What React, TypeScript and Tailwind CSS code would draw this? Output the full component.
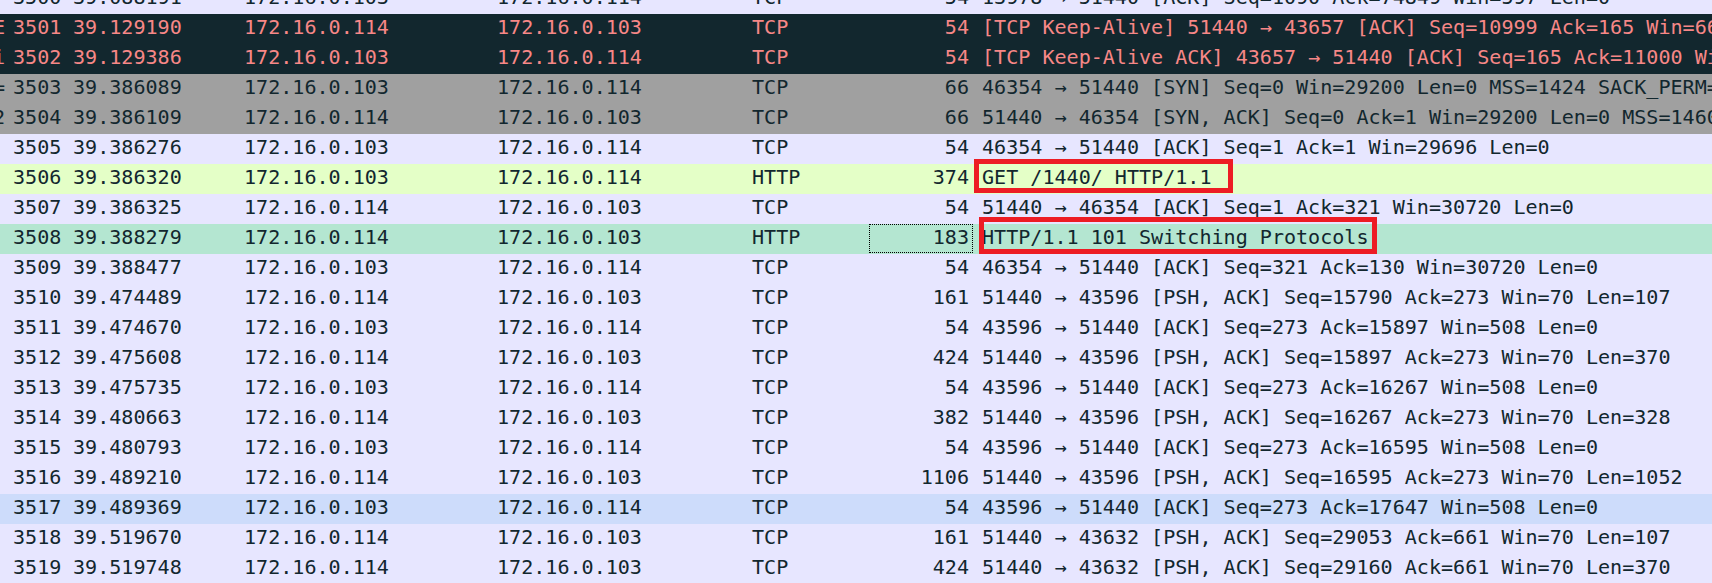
import React from "react";

type Packet = {
  mark: string;
  no: number;
  time: string;
  src: string;
  dst: string;
  proto: string;
  len: number;
  info: string;
  kind: "tcp" | "bad" | "syn" | "http" | "sel" | "hover";
  box?: 1 | 2;
  focus?: boolean;
};

const A = "172.16.0.103";
const B = "172.16.0.114";

const packets: Packet[] = [
  { mark: "", no: 3500, time: "39.088191", src: A, dst: B, proto: "TCP", len: 54, info: "13978 → 51440 [ACK] Seq=1090 Ack=74849 Win=597 Len=0", kind: "tcp" },
  { mark: "E", no: 3501, time: "39.129190", src: B, dst: A, proto: "TCP", len: 54, info: "[TCP Keep-Alive] 51440 → 43657 [ACK] Seq=10999 Ack=165 Win=661 Len=0", kind: "bad" },
  { mark: "i", no: 3502, time: "39.129386", src: A, dst: B, proto: "TCP", len: 54, info: "[TCP Keep-Alive ACK] 43657 → 51440 [ACK] Seq=165 Ack=11000 Win=502 Len=0", kind: "bad" },
  { mark: "=", no: 3503, time: "39.386089", src: A, dst: B, proto: "TCP", len: 66, info: "46354 → 51440 [SYN] Seq=0 Win=29200 Len=0 MSS=1424 SACK_PERM=1 WS=128", kind: "syn" },
  { mark: "2", no: 3504, time: "39.386109", src: B, dst: A, proto: "TCP", len: 66, info: "51440 → 46354 [SYN, ACK] Seq=0 Ack=1 Win=29200 Len=0 MSS=1460 SACK_PERM=1 WS=128", kind: "syn" },
  { mark: "", no: 3505, time: "39.386276", src: A, dst: B, proto: "TCP", len: 54, info: "46354 → 51440 [ACK] Seq=1 Ack=1 Win=29696 Len=0", kind: "tcp" },
  { mark: "", no: 3506, time: "39.386320", src: A, dst: B, proto: "HTTP", len: 374, info: "GET /1440/ HTTP/1.1", kind: "http", box: 1 },
  { mark: "", no: 3507, time: "39.386325", src: B, dst: A, proto: "TCP", len: 54, info: "51440 → 46354 [ACK] Seq=1 Ack=321 Win=30720 Len=0", kind: "tcp" },
  { mark: "", no: 3508, time: "39.388279", src: B, dst: A, proto: "HTTP", len: 183, info: "HTTP/1.1 101 Switching Protocols", kind: "sel", box: 2, focus: true },
  { mark: "", no: 3509, time: "39.388477", src: A, dst: B, proto: "TCP", len: 54, info: "46354 → 51440 [ACK] Seq=321 Ack=130 Win=30720 Len=0", kind: "tcp" },
  { mark: "", no: 3510, time: "39.474489", src: B, dst: A, proto: "TCP", len: 161, info: "51440 → 43596 [PSH, ACK] Seq=15790 Ack=273 Win=70 Len=107", kind: "tcp" },
  { mark: "", no: 3511, time: "39.474670", src: A, dst: B, proto: "TCP", len: 54, info: "43596 → 51440 [ACK] Seq=273 Ack=15897 Win=508 Len=0", kind: "tcp" },
  { mark: "", no: 3512, time: "39.475608", src: B, dst: A, proto: "TCP", len: 424, info: "51440 → 43596 [PSH, ACK] Seq=15897 Ack=273 Win=70 Len=370", kind: "tcp" },
  { mark: "", no: 3513, time: "39.475735", src: A, dst: B, proto: "TCP", len: 54, info: "43596 → 51440 [ACK] Seq=273 Ack=16267 Win=508 Len=0", kind: "tcp" },
  { mark: "", no: 3514, time: "39.480663", src: B, dst: A, proto: "TCP", len: 382, info: "51440 → 43596 [PSH, ACK] Seq=16267 Ack=273 Win=70 Len=328", kind: "tcp" },
  { mark: "", no: 3515, time: "39.480793", src: A, dst: B, proto: "TCP", len: 54, info: "43596 → 51440 [ACK] Seq=273 Ack=16595 Win=508 Len=0", kind: "tcp" },
  { mark: "", no: 3516, time: "39.489210", src: B, dst: A, proto: "TCP", len: 1106, info: "51440 → 43596 [PSH, ACK] Seq=16595 Ack=273 Win=70 Len=1052", kind: "tcp" },
  { mark: "", no: 3517, time: "39.489369", src: A, dst: B, proto: "TCP", len: 54, info: "43596 → 51440 [ACK] Seq=273 Ack=17647 Win=508 Len=0", kind: "hover" },
  { mark: "", no: 3518, time: "39.519670", src: B, dst: A, proto: "TCP", len: 161, info: "51440 → 43632 [PSH, ACK] Seq=29053 Ack=661 Win=70 Len=107", kind: "tcp" },
  { mark: "", no: 3519, time: "39.519748", src: B, dst: A, proto: "TCP", len: 424, info: "51440 → 43632 [PSH, ACK] Seq=29160 Ack=661 Win=70 Len=370", kind: "tcp" },
];

const rowStyle: Record<Packet["kind"], string> = {
  tcp: "bg-[#e7e6ff] text-[#12272e]",
  bad: "bg-[#12272e] text-[#f78787]",
  syn: "bg-[#a0a0a0] text-[#12272e]",
  http: "bg-[#e4ffc7] text-[#12272e]",
  sel: "bg-[#b4e6d1] text-[#12272e]",
  hover: "bg-[#cddcfb] text-[#12272e]",
};

function Row({ p }: { p: Packet }) {
  return (
    <div className={`flex h-[30px] leading-[26px] whitespace-nowrap ${rowStyle[p.kind]}`}>
      {/* cut-off status column */}
      <div className="w-[5px] shrink-0 overflow-hidden flex justify-end">
        <span className="shrink-0">{p.mark}</span>
      </div>
      <div className="w-[62px] shrink-0 pl-[8px]">{p.no}</div>
      <div className="w-[171px] shrink-0 pl-[6px]">{p.time}</div>
      <div className="w-[253px] shrink-0 pl-[6px]">{p.src}</div>
      <div className="w-[255px] shrink-0 pl-[6px]">{p.dst}</div>
      <div className="w-[123px] shrink-0 pl-[6px]">{p.proto}</div>
      <div className="relative w-[105px] shrink-0 pr-[5px] text-right">
        {p.len}
        {p.focus && (
          <div className="absolute left-0 top-0 w-[104px] h-[29px] border border-dotted border-black" />
        )}
      </div>
      <div className="relative flex-1 pl-[8px]">
        {p.info}
        {p.box === 1 && (
          <div className="absolute left-0 top-[-5px] w-[259px] h-[34px] border-[5px] border-[#ed1c24]" />
        )}
        {p.box === 2 && (
          <div className="absolute left-[5px] top-[-7px] w-[398px] h-[37px] border-[5px] border-[#ed1c24]" />
        )}
      </div>
    </div>
  );
}

export default function App() {
  return (
    <div className="w-[1712px] h-[583px] overflow-hidden bg-[#e7e6ff] font-['DejaVu_Sans_Mono',monospace] text-[20.07px]">
      <div className="mt-[-16px]">
        {packets.map((p) => (
          <Row key={p.no} p={p} />
        ))}
      </div>
    </div>
  );
}
